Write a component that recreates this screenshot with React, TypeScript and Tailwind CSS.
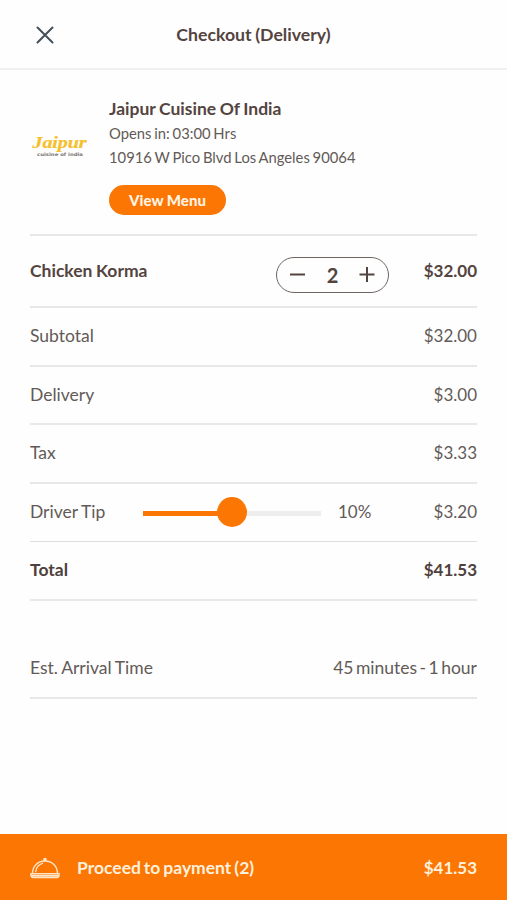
import React from "react";

function Row({ label, value, className = "", valueClass = "text-[17px]" }: { label: string; value: string; className?: string; valueClass?: string }) {
  return (
    <div className={`flex items-baseline justify-between border-b-2 border-[#e8e8e8] leading-6 ${className}`}>
      <span>{label}</span>
      <span className={valueClass}>{value}</span>
    </div>
  );
}

function Logo() {
  return (
    <svg width="60" height="28" viewBox="0 0 60 28" className="mt-[37px] shrink-0 [word-spacing:0px]">
      <text transform="translate(2.5 15) scale(1.26 1)" letterSpacing="0.6" fontFamily="'Liberation Serif', serif" fontStyle="italic" fontWeight="bold" fontSize="16" fill="#f5c02c" stroke="#f5c02c" strokeWidth="0.200" textLength="43.500">Jaipur</text>
      <text x="7" y="22.500" textLength="46" lengthAdjust="spacingAndGlyphs" fontFamily="'DejaVu Sans', sans-serif" fontSize="4.600" fontWeight="bold" fill="#77736f">cuisine of india</text>
    </svg>
  );
}

function Cloche() {
  return (
    <svg width="30" height="22" viewBox="0 0 30 22" fill="none" stroke="#ffe6c9" strokeWidth="1.4" strokeLinecap="round" strokeLinejoin="round">
      <path d="M2.5 16.5C2.5 9 8 4 15 4s12.500 5 12.500 12.500" />
      <path d="M5.700 14.500C6.500 10 9 7.300 12.500 6.400" />
      <circle cx="15" cy="2.500" r="1.100" fill="#ffe6c9" />
      <path d="M.8 16.800h28.400c0 2.300-.8 3.700-2.200 3.700H3C1.600 20.500.8 19.100.8 16.800ZM1.500 18.700h27" />
    </svg>
  );
}

export default function App() {
  return (
    <div className="flex h-[900px] w-[507px] flex-col bg-[#fefefe] font-['Lato',sans-serif] text-[17.500px] [word-spacing:-0.700px] text-[#625a57]">
      <header className="grid h-[70px] shrink-0 grid-cols-[90px_1fr_90px] items-center border-b-2 border-[#f0f0f0] pt-[2px]">
        <button aria-label="Close" className="flex justify-center">
          <svg width="18" height="18" viewBox="0 0 18 18" stroke="#465059" strokeWidth="2" strokeLinecap="round">
            <path d="M1.500 1.500l15 15M16.500 1.500l-15 15" />
          </svg>
        </button>
        <h1 className="text-center text-[17.700px] font-bold text-[#54443f]">Checkout (Delivery)</h1>
      </header>
      <main className="flex grow flex-col px-[30px]">
        <section className="flex h-[166px] items-start border-b-2 border-[#e8e8e8] pt-[26px]">
          <Logo />
          <div className="ml-[19px]">
            <h2 className="pt-px leading-6 font-bold text-[#54443f]">Jaipur Cuisine Of India</h2>
            <p className="text-[14.800px] leading-6 [word-spacing:-1px]">Opens in: 03:00 Hrs</p>
            <p className="text-[14.800px] leading-6 [word-spacing:-1px]">10916 W Pico Blvd Los Angeles 90064</p>
            <button className="mt-[16px] flex h-[30px] w-[117px] items-center justify-center rounded-full bg-[#fb7603] text-[15px] font-black [word-spacing:0px] text-[#fff3e3]">View Menu</button>
          </div>
        </section>
        <section className="flex h-[72px] items-center border-b-2 border-[#e8e8e8] font-bold text-[#54443f]">
          <span className="w-[246px]">Chicken Korma</span>
          <div className="mt-2 flex h-9 w-[113px] items-center justify-between rounded-full border-[1.500px] border-[#6c6562] px-[13px]">
            <svg width="16" height="16" viewBox="0 0 16 16" stroke="#54443f" strokeWidth="2"><path d="M0 7.500h15" /></svg>
            <span className="text-[20px]">2</span>
            <svg width="16" height="16" viewBox="0 0 16 16" stroke="#54443f" strokeWidth="2"><path d="M0.500 7.500h15M8 0v15" /></svg>
          </div>
          <span className="ml-auto text-[17px]">$32.00</span>
        </section>
        <Row label="Subtotal" value="$32.00" className="h-[59px] pt-[16px]" />
        <Row label="Delivery" value="$3.00" className="h-[58px] pt-[16px]" />
        <Row label="Tax" value="$3.33" className="h-[59px] pt-[16px]" />
        <section className="flex h-[58px] items-center border-b border-[#dddddd] pb-px">
          <span className="w-[113px]">Driver Tip</span>
          <div className="flex w-[178px] items-center">
            <div className="mt-[2px] h-[5px] w-[76px] bg-[#fb7603]" />
            <div className="z-10 -mx-[2px] size-[30px] shrink-0 rounded-full bg-[#fb7603]" />
            <div className="mt-[2px] h-[5px] grow bg-[#eeeeee]" />
          </div>
          <span className="ml-[17px] text-[17px]">10%</span>
          <span className="ml-auto text-[17px]">$3.20</span>
        </section>
        <Row label="Total" value="$41.53" className="h-[59px] pt-[16px] font-bold text-[#4e413d]" />
        <Row label="Est. Arrival Time" value="45 minutes - 1 hour" valueClass="[word-spacing:-2px]" className="mt-[39px] h-[59px] pt-[16px]" />
      </main>
      <footer className="flex h-[66px] shrink-0 items-center bg-[#fb7603] px-[30px] pt-[2px] font-bold text-[#fff0dc]">
        <Cloche />
        <span className="ml-[17px] [word-spacing:-1.300px]">Proceed to payment (2)</span>
        <span className="ml-auto text-[17px]">$41.53</span>
      </footer>
    </div>
  );
}
